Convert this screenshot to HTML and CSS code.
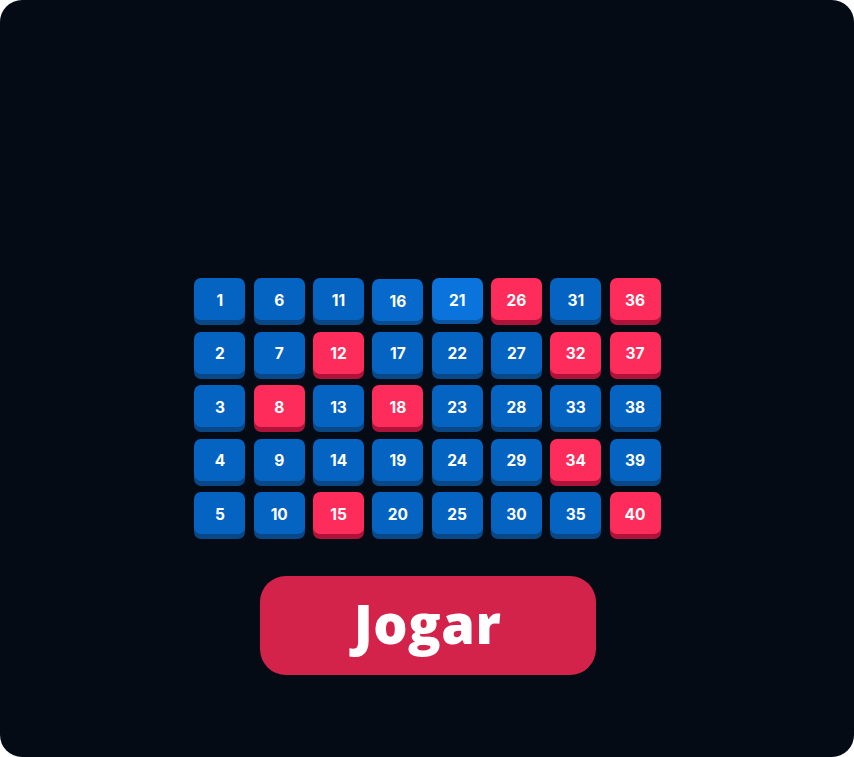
FILE: index.html
```html
<!DOCTYPE html>
<html lang="pt">
<head>
<meta charset="utf-8">
<title>Jogar</title>
<link rel="stylesheet" href="styles.css">
</head>
<body>
<main class="panel">
  <div class="board">
    <div class="tile blue">1</div><div class="tile blue">6</div><div class="tile blue">11</div><div class="tile blue soft">16</div><div class="tile blue bright">21</div><div class="tile red">26</div><div class="tile blue">31</div><div class="tile red">36</div>
    <div class="tile blue">2</div><div class="tile blue">7</div><div class="tile red">12</div><div class="tile blue">17</div><div class="tile blue">22</div><div class="tile blue">27</div><div class="tile red">32</div><div class="tile red">37</div>
    <div class="tile blue">3</div><div class="tile red">8</div><div class="tile blue">13</div><div class="tile red">18</div><div class="tile blue">23</div><div class="tile blue">28</div><div class="tile blue">33</div><div class="tile blue">38</div>
    <div class="tile blue">4</div><div class="tile blue">9</div><div class="tile blue">14</div><div class="tile blue">19</div><div class="tile blue">24</div><div class="tile blue">29</div><div class="tile red">34</div><div class="tile blue">39</div>
    <div class="tile blue">5</div><div class="tile blue">10</div><div class="tile red">15</div><div class="tile blue">20</div><div class="tile blue">25</div><div class="tile blue">30</div><div class="tile blue">35</div><div class="tile red">40</div>
  </div>
  <button class="play">Jogar</button>
</main>
</body>
</html>
```
FILE: styles.css
```css
html, body {
  margin: 0;
  padding: 0;
  background: #ffffff;
}
.panel {
  width: 854px;
  height: 757px;
  box-sizing: border-box;
  background: #040b14;
  border-radius: 22px;
  display: flex;
  flex-direction: column;
  align-items: center;
  padding-top: 278px;
  padding-left: 1px;
}
.board {
  display: grid;
  grid-template-columns: repeat(8, 51px);
  grid-auto-rows: 42px;
  column-gap: 8.3px;
  row-gap: 11.5px;
}
.tile {
  height: 42px;
  border-radius: 7px;
  display: flex;
  align-items: center;
  justify-content: center;
  color: #ffffff;
  font-family: Inter, "Open Sans", sans-serif;
  font-weight: 700;
  font-size: 15.5px;
  padding-top: 2px;
  box-sizing: border-box;
}
.blue {
  background: #0563c1;
  box-shadow: 0 5px 0 #0a4786;
}
.blue.soft {
  background: #0769cb;
  transform: translateY(1px);
  box-shadow: 0 4px 0 #0a4c90;
}
.blue.bright {
  background: #0a74dc;
  box-shadow: 0 4px 0 #0b55a3;
}
.red {
  background: #fe2c5b;
  box-shadow: 0 5px 0 #b0133a;
}
.play {
  margin-top: 42px;
  width: 336px;
  height: 99px;
  border: none;
  border-radius: 26px;
  background: #d4234a;
  color: #ffffff;
  font-family: "Open Sans", Inter, sans-serif;
  font-weight: 800;
  font-size: 54px;
  letter-spacing: 0.5px;
  padding: 0 0 6px 0;
}
```
